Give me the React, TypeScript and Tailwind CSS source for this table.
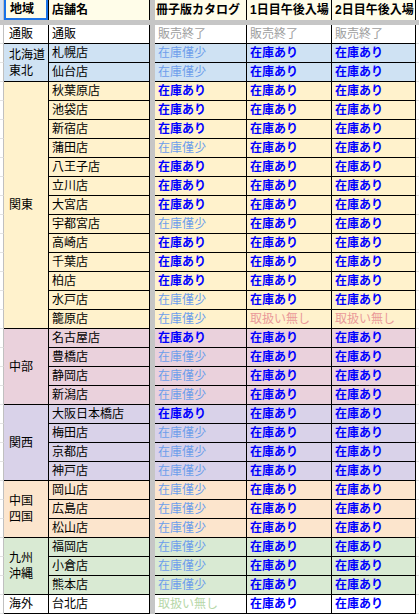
import React from "react"

type Status = "ari" | "kin" | "end" | "naiR" | "naiG"

const STATUS: Record<Status, { label: string; cls: string }> = {
  ari: { label: "在庫あり", cls: "font-bold text-[#0000ff]" },
  kin: { label: "在庫僅少", cls: "text-[#6d9eeb]" },
  end: { label: "販売終了", cls: "text-[#9e9e9e]" },
  naiR: { label: "取扱い無し", cls: "text-[#ea9999]" },
  naiG: { label: "取扱い無し", cls: "text-[#b6d7a8]" },
}

interface Group {
  region: string[]
  bg: string
  rows: [string, Status, Status, Status][]
}

const groups: Group[] = [
  { region: ["通販"], bg: "bg-white", rows: [["通販", "end", "end", "end"]] },
  {
    region: ["北海道", "東北"],
    bg: "bg-[#cfe2f3]",
    rows: [
      ["札幌店", "kin", "ari", "ari"],
      ["仙台店", "kin", "ari", "ari"],
    ],
  },
  {
    region: ["関東"],
    bg: "bg-[#fff2cc]",
    rows: [
      ["秋葉原店", "ari", "ari", "ari"],
      ["池袋店", "ari", "ari", "ari"],
      ["新宿店", "ari", "ari", "ari"],
      ["蒲田店", "kin", "ari", "ari"],
      ["八王子店", "ari", "ari", "ari"],
      ["立川店", "ari", "ari", "ari"],
      ["大宮店", "ari", "ari", "ari"],
      ["宇都宮店", "kin", "ari", "ari"],
      ["高崎店", "ari", "ari", "ari"],
      ["千葉店", "ari", "ari", "ari"],
      ["柏店", "ari", "ari", "ari"],
      ["水戸店", "kin", "ari", "ari"],
      ["籠原店", "kin", "naiR", "naiR"],
    ],
  },
  {
    region: ["中部"],
    bg: "bg-[#ead1dc]",
    rows: [
      ["名古屋店", "ari", "ari", "ari"],
      ["豊橋店", "kin", "ari", "ari"],
      ["静岡店", "kin", "ari", "ari"],
      ["新潟店", "kin", "ari", "ari"],
    ],
  },
  {
    region: ["関西"],
    bg: "bg-[#d9d2e9]",
    rows: [
      ["大阪日本橋店", "ari", "ari", "ari"],
      ["梅田店", "kin", "ari", "ari"],
      ["京都店", "kin", "ari", "ari"],
      ["神戸店", "kin", "ari", "ari"],
    ],
  },
  {
    region: ["中国", "四国"],
    bg: "bg-[#fce5cd]",
    rows: [
      ["岡山店", "kin", "ari", "ari"],
      ["広島店", "kin", "ari", "ari"],
      ["松山店", "kin", "ari", "ari"],
    ],
  },
  {
    region: ["九州", "沖縄"],
    bg: "bg-[#d9ead3]",
    rows: [
      ["福岡店", "kin", "ari", "ari"],
      ["小倉店", "kin", "ari", "ari"],
      ["熊本店", "kin", "ari", "ari"],
    ],
  },
  { region: ["海外"], bg: "bg-white", rows: [["台北店", "naiG", "ari", "ari"]] },
]

const SPAN: Record<number, string> = {
  1: "row-span-1",
  2: "row-span-2",
  3: "row-span-3",
  4: "row-span-4",
  13: "row-span-13",
}

const cell = "flex items-center border-r border-b border-black pl-[3px] whitespace-nowrap overflow-hidden"

export default function App() {
  return (
    <div
      className="w-[419px] h-[616px] overflow-hidden bg-white text-[12px] text-black"
      style={{ fontFamily: '"Liberation Sans", "Noto Sans CJK JP", sans-serif' }}
    >
      <div className="grid grid-cols-[4px_45px_101px_5px_92px_85px_84px_1fr] grid-rows-[20px_5px] auto-rows-[19px]">
        {/* header row */}
        <div className="bg-[#d6e2f3] border-r border-[#c0c0c0]" />
        <div className="bg-[#fffde9] border-r border-black">
          <div className="h-full flex items-center pl-[4px] border-2 border-t-0 border-[#1a73e8] font-bold">地域</div>
        </div>
        <div className="flex items-center bg-[#fffde9] border-r border-black pl-[3px] font-bold">店舗名</div>
        <div className="bg-[#c6c6c6]" />
        <div className="flex items-center bg-[#fffde9] border-r border-black pl-[1px] font-bold whitespace-nowrap overflow-hidden">冊子版カタログ</div>
        <div className="flex items-center bg-[#fffde9] border-r border-black pl-[3px] font-bold whitespace-nowrap">1日目午後入場</div>
        <div className="flex items-center bg-[#fffde9] border-r border-black pl-[3px] font-bold whitespace-nowrap">2日目午後入場</div>
        <div className="bg-white" />

        {/* frozen divider */}
        <div className="col-span-8 bg-[#c6c6c6]" />

        {groups.map((g) =>
          g.rows.map(([store, c, d, e], i) => (
            <React.Fragment key={store}>
              <div className="bg-white border-r border-b border-r-[#c0c0c0] border-b-[#e2e2e2]" />
              {i === 0 && (
                <div className={`${SPAN[g.rows.length]} ${g.bg} flex items-center border-r border-b border-black pl-[5px] leading-[16px]`}>
                  <div>
                    {g.region.map((r) => (
                      <div key={r}>{r}</div>
                    ))}
                  </div>
                </div>
              )}
              <div className={`${cell} ${g.bg}`}>{store}</div>
              <div className="bg-[#c6c6c6]" />
              <div className={`${cell} ${g.bg} ${STATUS[c].cls}`}>{STATUS[c].label}</div>
              <div className={`${cell} ${g.bg} ${STATUS[d].cls}`}>{STATUS[d].label}</div>
              <div className={`${cell} ${g.bg} ${STATUS[e].cls}`}>{STATUS[e].label}</div>
              <div className="bg-white border-b border-[#e2e2e2]" />
            </React.Fragment>
          ))
        )}
      </div>
    </div>
  )
}
